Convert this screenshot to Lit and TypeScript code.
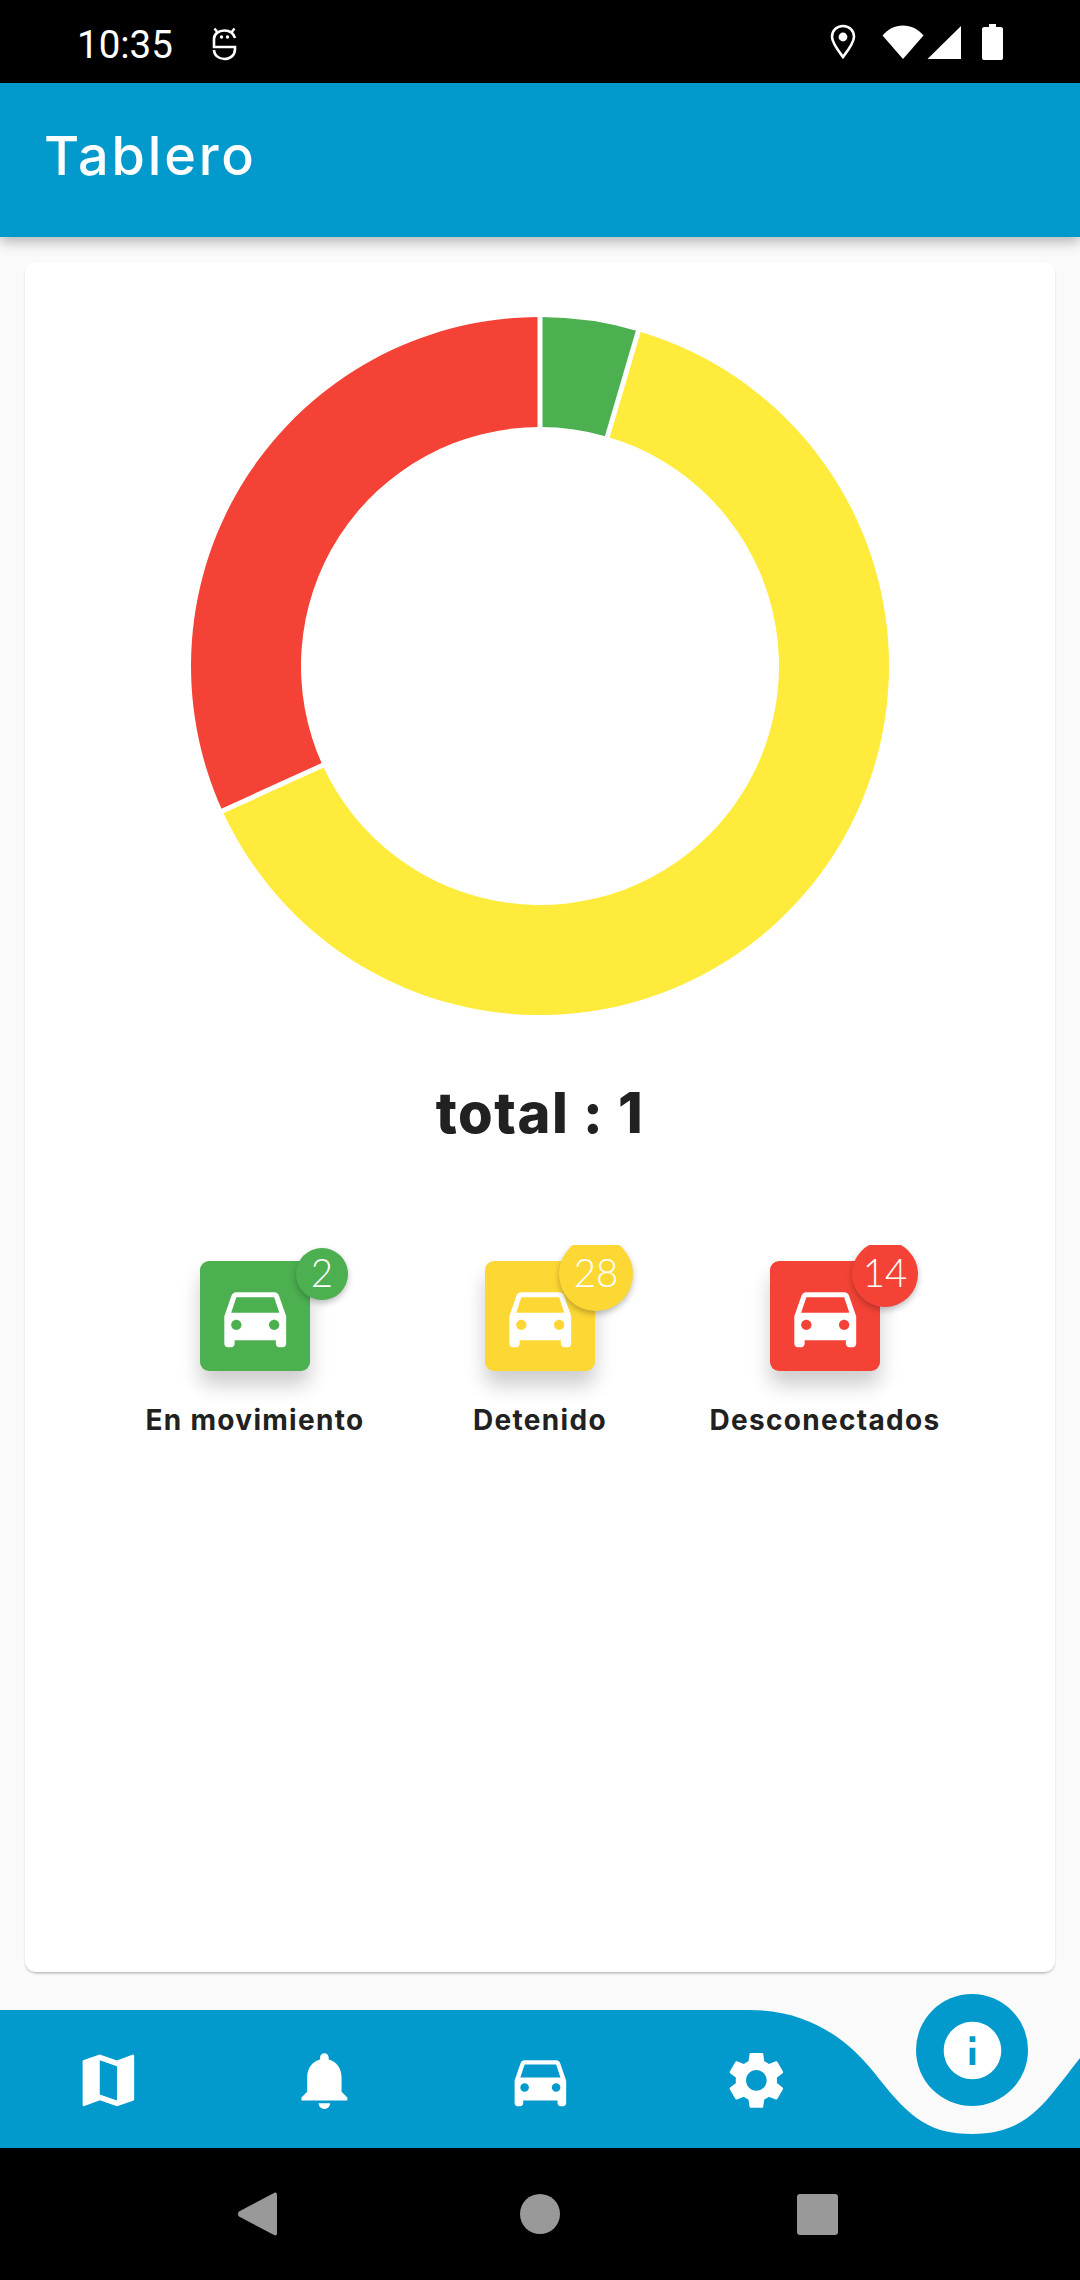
import { LitElement, css, html, svg } from 'lit'
import { customElement } from 'lit/decorators.js'

const CAR =
  'M18.92 6.01C18.72 5.42 18.16 5 17.5 5h-11c-.66 0-1.21.42-1.42 1.01L3 12v8c0 .55.45 1 1 1h1c.55 0 1-.45 1-1v-1h12v1c0 .55.45 1 1 1h1c.55 0 1-.45 1-1v-8l-2.08-5.99zM6.5 16c-.83 0-1.5-.67-1.5-1.5S5.67 13 6.5 13s1.5.67 1.5 1.5S7.33 16 6.5 16zm11 0c-.83 0-1.5-.67-1.5-1.5s.67-1.5 1.5-1.5 1.5.67 1.5 1.5-.67 1.5-1.5 1.5zM5 11l1.5-4.5h11L19 11H5z'
const MAP =
  'M20.5 3l-.16.03L15 5.1 9 3 3.36 4.9c-.21.07-.36.25-.36.48V20.5c0 .28.22.5.5.5l.16-.03L9 18.9l6 2.1 5.64-1.9c.21-.07.36-.25.36-.48V3.5c0-.28-.22-.5-.5-.5zM15 19l-6-2.11V5l6 2.11V19z'
const BELL =
  'M12 22c1.1 0 2-.9 2-2h-4c0 1.1.89 2 2 2zm6-6v-5c0-3.07-1.64-5.64-4.5-6.32V4c0-.83-.67-1.5-1.5-1.5s-1.5.67-1.5 1.5v.68C7.63 5.36 6 7.92 6 11v5l-2 2v1h16v-1l-2-2z'
const GEAR =
  'M19.14 12.94c.04-.3.06-.61.06-.94 0-.32-.02-.64-.07-.94l2.03-1.58c.18-.14.23-.41.12-.61l-1.92-3.32c-.12-.22-.37-.29-.59-.22l-2.39.96c-.5-.38-1.03-.7-1.62-.94l-.36-2.54c-.04-.24-.24-.41-.48-.41h-3.84c-.24 0-.43.17-.47.41l-.36 2.54c-.59.24-1.13.57-1.62.94l-2.39-.96c-.22-.08-.47 0-.59.22L2.74 8.87c-.12.21-.08.47.12.61l2.03 1.58c-.05.3-.09.63-.09.94s.02.64.07.94l-2.03 1.58c-.18.14-.23.41-.12.61l1.92 3.32c.12.22.37.29.59.22l2.39-.96c.5.38 1.03.7 1.62.94l.36 2.54c.05.24.24.41.48.41h3.84c.24 0 .44-.17.47-.41l.36-2.54c.59-.24 1.13-.56 1.62-.94l2.39.96c.22.08.47 0 .59-.22l1.92-3.32c.12-.22.07-.47-.12-.61l-2.01-1.58zM12 15.6c-1.98 0-3.6-1.62-3.6-3.6s1.62-3.6 3.6-3.6 3.6 1.62 3.6 3.6-1.62 3.6-3.6 3.6z'
const INFO =
  'M12 2C6.48 2 2 6.48 2 12s4.48 10 10 10 10-4.48 10-10S17.52 2 12 2zm1 15h-2v-6h2v6zm0-8h-2V7h2v2z'

const stats = [
  { label: 'En movimiento', value: 2, color: '#4caf50', ring: '#4caf50', badge: 52 },
  { label: 'Detenido', value: 28, color: '#fdd835', ring: '#ffeb3b', badge: 74 },
  { label: 'Desconectados', value: 14, color: '#f44336', ring: '#f44336', badge: 66 },
]

// donut segments, angles clockwise from 12 o'clock
function polar(r: number, deg: number) {
  const a = (deg * Math.PI) / 180
  return `${(350 + r * Math.sin(a)).toFixed(2)} ${(350 - r * Math.cos(a)).toFixed(2)}`
}

function donut() {
  const total = stats.reduce((sum, s) => sum + s.value, 0)
  const outer = 349
  const inner = 239
  let start = 0
  const arcs = []
  const gaps = []
  for (const s of stats) {
    const end = start + (s.value / total) * 360
    const large = end - start > 180 ? 1 : 0
    arcs.push(
      svg`<path fill=${s.ring} d="M${polar(outer, start)} A${outer} ${outer} 0 ${large} 1 ${polar(outer, end)} L${polar(inner, end)} A${inner} ${inner} 0 ${large} 0 ${polar(inner, start)} Z"></path>`,
    )
    gaps.push(
      svg`<path stroke="#fff" stroke-width="5" d="M${polar(inner - 2, start)} L${polar(outer + 2, start)}"></path>`,
    )
    start = end
  }
  return html`<svg class="chart" viewBox="0 0 700 700">${arcs}${gaps}</svg>`
}

function icon(d: string, cls: string) {
  return html`<svg class=${cls} viewBox="0 0 24 24"><path d=${d}></path></svg>`
}

@customElement('app-root')
export class AppRoot extends LitElement {
  static styles = css`
    :host {
      display: flex;
      flex-direction: column;
      width: 1080px;
      height: 2280px;
      background: #fafafa;
      font-family: Inter, 'Liberation Sans', sans-serif;
      overflow: hidden;
    }
    .status {
      height: 83px;
      flex: none;
      background: #000;
      display: flex;
      align-items: center;
      color: #fff;
      padding: 0 77px 0 77px;
      box-sizing: border-box;
    }
    .time {
      font-family: Roboto, sans-serif;
      font-size: 38.5px;
      line-height: 83px;
      width: 135px;
      padding-top: 6px;
      box-sizing: border-box;
    }
    .status svg {
      display: block;
      fill: #fff;
    }
    .spacer {
      flex: 1;
    }
    .appbar {
      height: 154px;
      flex: none;
      box-sizing: border-box;
      background: #029acd;
      color: #fff;
      display: flex;
      align-items: center;
      padding: 0 0 10px 44px;
      font-size: 54px;
      letter-spacing: 2.8px;
      font-weight: 500;
      box-shadow: 0 5px 12px rgba(0, 0, 0, 0.28);
      position: relative;
      z-index: 1;
    }
    .main {
      flex: 1;
      display: flex;
      padding: 25px 25px 38px;
      min-height: 0;
    }
    .card {
      flex: 1;
      background: #fff;
      border-radius: 11px;
      box-shadow: 0 2px 3px -1px rgba(0, 0, 0, 0.35);
      display: flex;
      flex-direction: column;
      align-items: center;
      padding-top: 54px;
    }
    .chart {
      display: block;
      width: 700px;
      height: 700px;
      flex: none;
      margin-right: 1px;
    }
    .total {
      margin-top: 63px;
      font-size: 56px;
      line-height: 68px;
      font-weight: 800;
      letter-spacing: 1.5px;
      color: #212121;
      flex: none;
    }
    .stats {
      margin-top: 98px;
      padding-top: 16px;
      width: 855px;
      flex: none;
      display: grid;
      grid-template-columns: repeat(3, 1fr);
      overflow: hidden;
      padding-bottom: 30px;
    }
    .stat {
      display: flex;
      flex-direction: column;
      align-items: center;
    }
    .tile {
      width: 110px;
      height: 110px;
      border-radius: 9px;
      position: relative;
      display: flex;
      align-items: center;
      justify-content: center;
      box-shadow: 0 14px 20px rgba(0, 0, 0, 0.2);
    }
    .tile-car {
      width: 82.5px;
      height: 82.5px;
      fill: #fff;
    }
    .badge {
      position: absolute;
      top: 13px;
      right: -38px;
      transform: translateY(-50%);
      box-sizing: border-box;
      padding-bottom: 5px;
      border-radius: 50%;
      display: flex;
      align-items: center;
      justify-content: center;
      color: #fff;
      font-family: Lato, sans-serif;
      font-weight: 300;
      font-size: 38.5px;
      box-shadow: 0 3px 6px rgba(0, 0, 0, 0.26);
    }
    .label {
      margin-top: 30px;
      font-size: 28px;
      line-height: 38px;
      font-weight: 700;
      letter-spacing: 1.3px;
      color: #212121;
      white-space: nowrap;
    }
    .bottom {
      height: 138px;
      flex: none;
      position: relative;
      display: grid;
      grid-template-columns: repeat(5, 216px);
      align-items: center;
      justify-items: center;
    }
    .wave {
      position: absolute;
      left: 0;
      top: 0;
      width: 1080px;
      height: 138px;
      fill: #029acd;
    }
    .nav-icon {
      width: 68.75px;
      height: 68.75px;
      fill: #fff;
      position: relative;
      margin-top: 2px;
    }
    .fab {
      position: absolute;
      left: 916px;
      top: -16px;
      width: 112px;
      height: 112px;
      border-radius: 50%;
      background: #029acd;
      display: flex;
      align-items: center;
      justify-content: center;
    }
    .fab svg {
      width: 69px;
      height: 69px;
      fill: #fff;
    }
    .system {
      height: 132px;
      flex: none;
      background: #000;
      display: grid;
      grid-template-columns: 298px 222px 40px 237px 41px;
      align-items: center;
    }
    .back {
      grid-column: 1;
      justify-self: end;
      width: 40px;
      height: 44px;
      fill: #999;
      margin-right: 20px;
    }
    .home {
      grid-column: 3;
      width: 40px;
      height: 40px;
      border-radius: 50%;
      background: #999;
    }
    .recent {
      grid-column: 5;
      width: 41px;
      height: 41px;
      border-radius: 3px;
      background: #999;
    }
  `

  render() {
    return html`
      <div class="status">
        <span class="time">10:35</span>
        <svg width="26" height="40" viewBox="0 0 26 40">
          <path
            fill="none"
            stroke="#fff"
            stroke-width="2.6"
            d="M23 16 C21.500 11 18 8.500 12.500 8.500 C6.500 8.500 2 12 2 17 V25 H23 V27 C23 33 18.500 37 12.500 37 C6.500 37 2 33 2 28"
          ></path>
          <path
            fill="none"
            stroke="#fff"
            stroke-width="2.4"
            d="M2.500 6.500 L6 11 M22.500 6.500 L19 11"
          ></path>
          <circle cx="9.500" cy="15" r="1.700"></circle>
          <circle cx="15.500" cy="15" r="1.700"></circle>
        </svg>
        <span class="spacer"></span>
        <svg width="26" height="36" viewBox="0 0 26 36" style="margin-right:26px">
          <path
            fill="none"
            stroke="#fff"
            stroke-width="2.6"
            d="M13 2 C6.500 2 2 6.800 2 12.800 C2 19 8 26.500 13 33 C18 26.500 24 19 24 12.800 C24 6.800 19.500 2 13 2 Z"
          ></path>
          <circle cx="13" cy="13" r="4.400"></circle>
        </svg>
        <svg width="42" height="36" viewBox="0 0 42 36" style="margin-right:3px">
          <path d="M0.500 11.500 C6 5 13 1.500 21 1.500 C29 1.500 36 5 41.500 11.500 L21 35 Z"></path>
        </svg>
        <svg width="35" height="36" viewBox="0 0 35 36" style="margin-right:20px">
          <path d="M34 2 V35 H0.500 Z"></path>
        </svg>
        <svg width="21" height="38" viewBox="0 0 21 38">
          <path
            d="M7 1 H14 V4 H19 C20 4 21 5 21 6 V35 C21 36.500 20 37 19 37 H2 C1 37 0 36.500 0 35 V6 C0 5 1 4 2 4 H7 Z"
          ></path>
        </svg>
      </div>
      <div class="appbar">Tablero</div>
      <div class="main">
        <div class="card">
          ${donut()}
          <div class="total">total : 1</div>
          <div class="stats">
            ${stats.map(
              (s) => html`
                <div class="stat">
                  <div class="tile" style="background:${s.color}">
                    ${icon(CAR, 'tile-car')}
                    <div
                      class="badge"
                      style="background:${s.color};width:${s.badge}px;height:${s.badge}px"
                    >
                      ${s.value}
                    </div>
                  </div>
                  <div class="label">${s.label}</div>
                </div>
              `,
            )}
          </div>
        </div>
      </div>
      <div class="bottom">
        <svg class="wave" viewBox="0 0 1080 138">
          <path
            d="M0 0 H750 C810 0 850 30 880 70 C910 108 930 124 972 124 C1015 124 1035 105 1055 80 C1065 68 1072 58 1080 48 V138 H0 Z"
          ></path>
        </svg>
        ${icon(MAP, 'nav-icon')} ${icon(BELL, 'nav-icon')} ${icon(CAR, 'nav-icon')}
        ${icon(GEAR, 'nav-icon')}
        <div class="fab">${icon(INFO, '')}</div>
      </div>
      <div class="system">
        <svg class="back" viewBox="0 0 40 44">
          <path
            d="M1 19.500 L36 1 C38 0 39 1 39 3 V41 C39 43 38 44 36 43 L1 24.500 C-0.300 23 -0.300 21 1 19.500 Z"
          ></path>
        </svg>
        <div class="home"></div>
        <div class="recent"></div>
      </div>
    `
  }
}
